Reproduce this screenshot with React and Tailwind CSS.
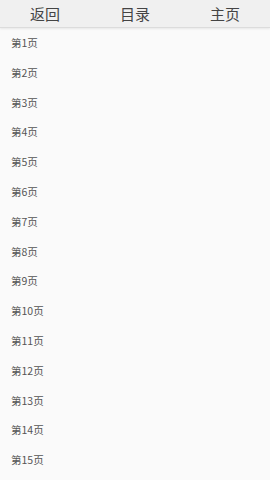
export default function App() {
  const pages = Array.from({ length: 15 }, (_, i) => i + 1)

  return (
    <div className="w-[270px] h-[480px] overflow-hidden bg-[#fafafa]" style={{ fontFamily: '"Noto Sans CJK SC", "Noto Sans", sans-serif' }}>
      {/* Top nav */}
      <div className="grid grid-cols-3 h-[28px] bg-[#f0f0f0] border-b border-[#dcdcdc] shadow-[0_1px_2px_rgba(0,0,0,0.08)] text-[15px] text-[#444] leading-none">
        <div className="flex items-center justify-center">返回</div>
        <div className="flex items-center justify-center">目录</div>
        <div className="flex items-center justify-center">主页</div>
      </div>

      {/* Page list */}
      <div>
        {pages.map(p => (
          <div key={p} className="h-[29.8px] flex items-center pl-[11px] text-[10.5px] text-[#555]">
            第{p}页
          </div>
        ))}
      </div>
    </div>
  )
}
